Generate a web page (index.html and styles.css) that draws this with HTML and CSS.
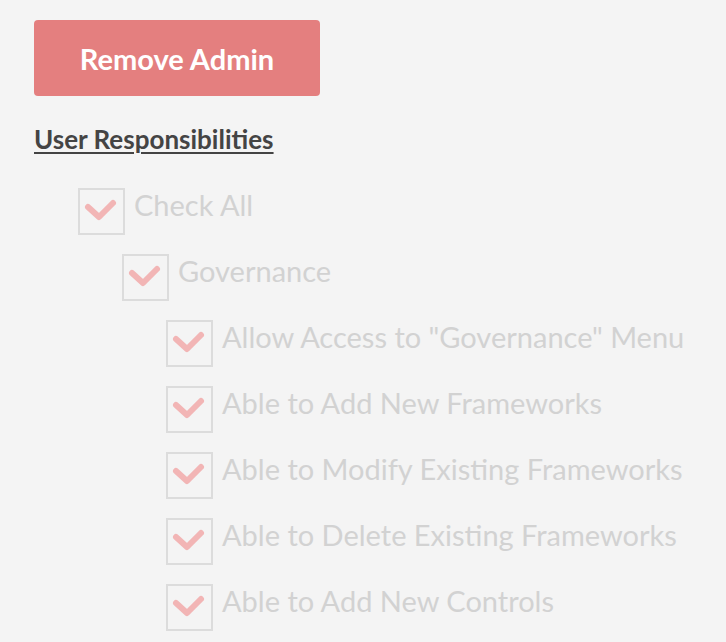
FILE: index.html
```html
<!DOCTYPE html>
<html lang="en">
<head>
<meta charset="UTF-8">
<title>User Responsibilities</title>
<link rel="stylesheet" href="styles.css">
</head>
<body>

<div class="page">
  <button class="btn-remove">Remove Admin</button>

  <h2 class="section-title">User Responsibilities</h2>

  <ul class="perm-tree">
    <li class="perm level-0">
      <span class="box"><svg viewBox="0 0 47 47"><polyline points="10,19 21,29 35,15"/></svg></span>
      <span class="label">Check All</span>
    </li>
    <li class="perm level-1">
      <span class="box"><svg viewBox="0 0 47 47"><polyline points="10,19 21,29 35,15"/></svg></span>
      <span class="label">Governance</span>
    </li>
    <li class="perm level-2">
      <span class="box"><svg viewBox="0 0 47 47"><polyline points="10,19 21,29 35,15"/></svg></span>
      <span class="label">Allow Access to "Governance" Menu</span>
    </li>
    <li class="perm level-2">
      <span class="box"><svg viewBox="0 0 47 47"><polyline points="10,19 21,29 35,15"/></svg></span>
      <span class="label">Able to Add New Frameworks</span>
    </li>
    <li class="perm level-2">
      <span class="box"><svg viewBox="0 0 47 47"><polyline points="10,19 21,29 35,15"/></svg></span>
      <span class="label">Able to Modify Existing Frameworks</span>
    </li>
    <li class="perm level-2">
      <span class="box"><svg viewBox="0 0 47 47"><polyline points="10,19 21,29 35,15"/></svg></span>
      <span class="label">Able to Delete Existing Frameworks</span>
    </li>
    <li class="perm level-2">
      <span class="box"><svg viewBox="0 0 47 47"><polyline points="10,19 21,29 35,15"/></svg></span>
      <span class="label">Able to Add New Controls</span>
    </li>
  </ul>
</div>

</body>
</html>
```

FILE: styles.css
```css
body {
  margin: 0;
  background-color: #f4f4f4;
  font-family: 'Lato', 'Open Sans', sans-serif;
  color: #444;
}
.page {
  padding: 20px 34px;
}
.btn-remove {
  display: block;
  width: 286px;
  height: 76px;
  border: none;
  border-radius: 4px;
  background-color: #e47f7f;
  color: #fff;
  font-family: inherit;
  font-size: 29px;
  font-weight: 700;
  cursor: pointer;
}
.section-title {
  margin: 28px 0 0;
  font-size: 26px;
  font-weight: 700;
  line-height: 30px;
  text-decoration: underline;
  text-decoration-thickness: 2px;
  text-underline-offset: 3px;
  color: #444;
}
.perm-tree {
  list-style: none;
  margin: 34px 0 0;
  padding: 0;
}
.perm {
  display: flex;
  align-items: flex-start;
  gap: 9px;
  margin-bottom: 19px;
}
.level-0 { padding-left: 44px; }
.level-1 { padding-left: 88px; }
.level-2 { padding-left: 132px; }
.box {
  flex: none;
  width: 43px;
  height: 43px;
  border: 2px solid #dcdcdc;
}
.box svg {
  display: block;
  width: 47px;
  height: 47px;
  margin: -2px;
}
.box polyline {
  fill: none;
  stroke: #f2b5b5;
  stroke-width: 6;
  stroke-linecap: round;
  stroke-linejoin: round;
}
.label {
  font-size: 29px;
  line-height: 34px;
  color: #d2d2d2;
}
```
